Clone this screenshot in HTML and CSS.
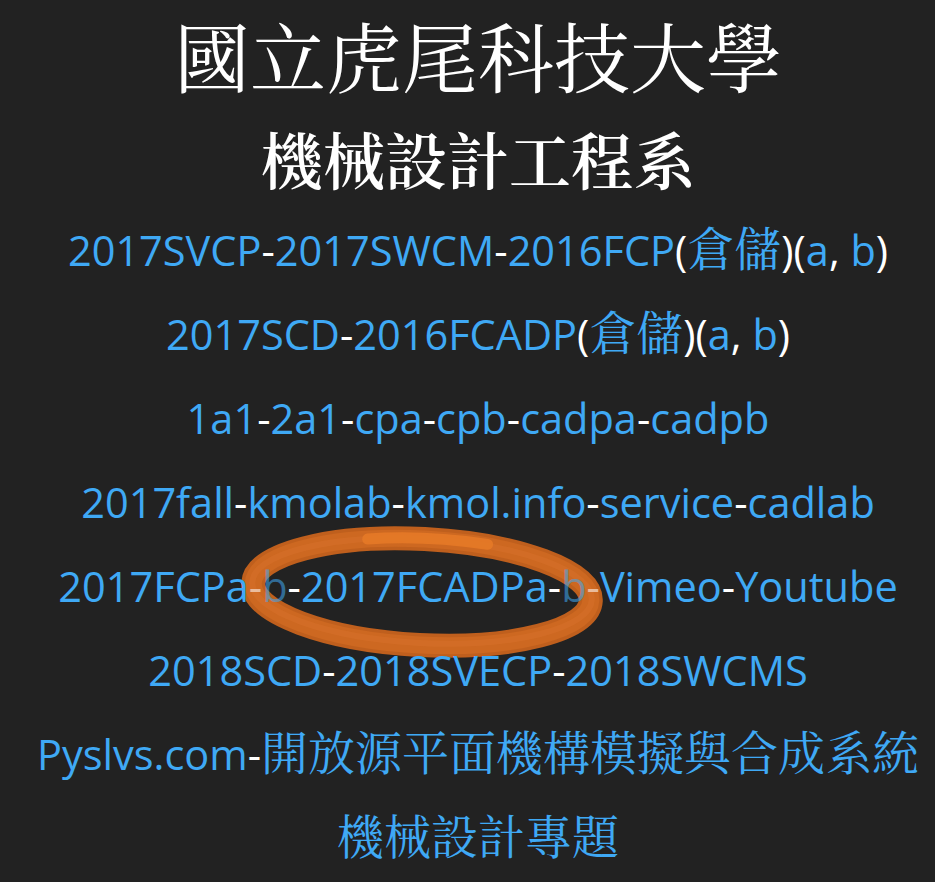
FILE: index.html
```html
<!DOCTYPE html>
<html lang="zh-Hant">
<head>
<meta charset="utf-8">
<title>國立虎尾科技大學 機械設計工程系</title>
<link rel="stylesheet" href="styles.css">
</head>
<body>
<main class="page">
  <h1 class="title">國立虎尾科技大學</h1>
  <h2 class="subtitle">機械設計工程系</h2>
  <nav class="links">
    <div class="row"><a href="#">2017SVCP</a>-<a href="#">2017SWCM</a>-<a href="#">2016FCP</a>(<a href="#" class="cjk">倉儲</a>)(<a href="#">a</a>, <a href="#">b</a>)</div>
    <div class="row"><a href="#">2017SCD</a>-<a href="#">2016FCADP</a>(<a href="#" class="cjk">倉儲</a>)(<a href="#">a</a>, <a href="#">b</a>)</div>
    <div class="row"><a href="#">1a1</a>-<a href="#">2a1</a>-<a href="#">cpa</a>-<a href="#">cpb</a>-<a href="#">cadpa</a>-<a href="#">cadpb</a></div>
    <div class="row"><a href="#">2017fall</a>-<a href="#">kmolab</a>-<a href="#">kmol.info</a>-<a href="#">service</a>-<a href="#">cadlab</a></div>
    <div class="row"><a href="#">2017FCPa</a><span class="dim">-</span><a href="#" class="dim">b</a>-<a href="#">2017FCADPa</a>-<a href="#" class="dim">b</a><span class="dim">-</span><a href="#">Vimeo</a>-<a href="#">Youtube</a></div>
    <div class="row"><a href="#">2018SCD</a>-<a href="#">2018SVECP</a>-<a href="#">2018SWCMS</a></div>
    <div class="row"><a href="#">Pyslvs.com</a>-<a href="#" class="cjk">開放源平面機構模擬與合成系統</a></div>
    <div class="row"><a href="#" class="cjk">機械設計專題</a></div>
  </nav>
  <svg class="mark" width="400" height="150" viewBox="0 0 400 150" aria-hidden="true">
    <g transform="rotate(3 192 75)" fill="none">
      <ellipse cx="192" cy="75" rx="169" ry="53" stroke="#bf5f1d" stroke-width="24"/>
      <ellipse cx="192" cy="75" rx="169" ry="53" stroke="#cd6821" stroke-width="17"/>
      <ellipse cx="192" cy="74" rx="170" ry="52" stroke="#d6702a" stroke-width="6" opacity="0.6"/>
      <path d="M135 25 Q190 18 255 24" stroke="#e67a27" stroke-width="11" stroke-linecap="round" opacity="0.85"/>
    </g>
  </svg>
</main>
</body>
</html>
```
FILE: styles.css
```css
html, body {
  margin: 0;
  padding: 0;
  background: #222222;
}

.page {
  position: relative;
  padding-left: 21px;
  display: flex;
  flex-direction: column;
  text-align: center;
  color: #ffffff;
}

.title {
  margin: 0;
  line-height: 110px;
  font-family: "Noto Serif CJK TC", "Noto Sans CJK TC", serif;
  font-size: 76px;
  font-weight: normal;
}

.subtitle {
  margin: 0;
  line-height: 98px;
  font-family: "Noto Serif CJK TC", "Noto Sans CJK TC", serif;
  font-size: 62px;
  font-weight: 600;
}

.links {
  position: relative;
  z-index: 1;
  display: flex;
  flex-direction: column;
}

.row {
  height: 84px;
  line-height: 84px;
  font-family: "Open Sans", "Noto Sans CJK TC", sans-serif;
  font-size: 41.5px;
  color: #ffffff;
  white-space: nowrap;
}

.row a {
  color: #3fa9f5;
  text-decoration: none;
}

.row .cjk {
  font-family: "Noto Serif CJK TC", "Noto Sans CJK TC", serif;
  font-size: 47px;
  line-height: 1;
}

.row .dim {
  opacity: 0.55;
}

.mark {
  position: absolute;
  z-index: 0;
  left: 230px;
  top: 517px;
  pointer-events: none;
}
```
